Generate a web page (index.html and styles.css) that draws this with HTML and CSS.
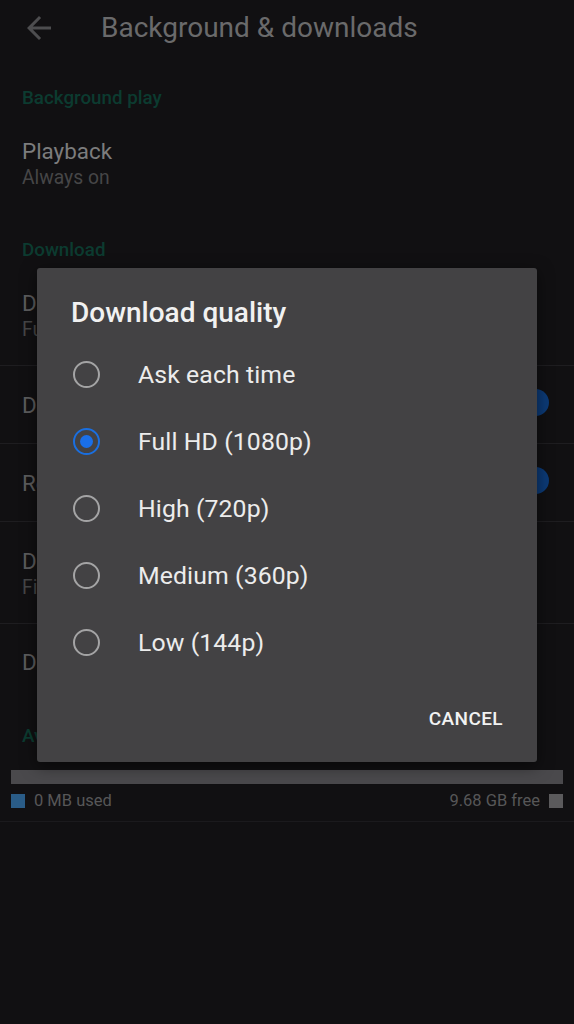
FILE: index.html
```html
<!DOCTYPE html>
<html lang="en">
<head>
<meta charset="utf-8">
<title>Background &amp; downloads</title>
<link rel="stylesheet" href="styles.css">
</head>
<body>
<div class="screen">
  <header class="topbar">
    <svg class="back" viewBox="0 0 24 24" width="36" height="36"><path d="M20 11H7.83l5.59-5.59L12 4l-8 8 8 8 1.41-1.41L7.83 13H20v-2z" fill="#4d4d4f"/></svg>
    <h1 class="title">Background &amp; downloads</h1>
  </header>

  <div class="sec-head first">Background play</div>
  <div class="row two playback">
    <div class="text">
      <div class="r-title">Playback</div>
      <div class="r-sub">Always on</div>
    </div>
  </div>

  <div class="sec-head">Download</div>
  <div class="row two quality divided">
    <div class="text">
      <div class="r-title">Download quality</div>
      <div class="r-sub">Full HD (1080p)</div>
    </div>
  </div>
  <div class="row one divided">
    <div class="r-title">Download over Wi-Fi only</div>
    <div class="switch"><span class="thumb"></span></div>
  </div>
  <div class="row one divided">
    <div class="r-title">Recommended downloads</div>
    <div class="switch"><span class="thumb"></span></div>
  </div>
  <div class="row two location divided">
    <div class="text">
      <div class="r-title">Download location</div>
      <div class="r-sub">Files on device storage</div>
    </div>
  </div>
  <div class="row one last">
    <div class="r-title">Delete all downloads</div>
  </div>

  <div class="sec-head">Available storage</div>
  <div class="storage">
    <div class="bar"></div>
    <div class="legend">
      <div class="leg"><span class="sq used"></span><span>0 MB used</span></div>
      <div class="leg"><span>9.68 GB free</span><span class="sq free"></span></div>
    </div>
  </div>

  <div class="dialog">
    <h2 class="d-title">Download quality</h2>
    <ul class="options">
      <li class="opt"><span class="radio"></span><span class="o-label">Ask each time</span></li>
      <li class="opt"><span class="radio on"></span><span class="o-label">Full HD (1080p)</span></li>
      <li class="opt"><span class="radio"></span><span class="o-label">High (720p)</span></li>
      <li class="opt"><span class="radio"></span><span class="o-label">Medium (360p)</span></li>
      <li class="opt"><span class="radio"></span><span class="o-label">Low (144p)</span></li>
    </ul>
    <div class="actions"><span class="btn">CANCEL</span></div>
  </div>
</div>
</body>
</html>
```

FILE: styles.css
```css
* { box-sizing: border-box; }
html, body { margin: 0; padding: 0; }
body {
  background: #111012;
  font-family: Roboto, "Noto Sans", "Liberation Sans", sans-serif;
  color: #7a7a7a;
  width: 574px;
  height: 1024px;
  overflow: hidden;
}
.screen { position: relative; width: 574px; height: 1024px; }

.topbar {
  height: 56px;
  display: flex;
  align-items: center;
}
.back { margin-left: 21px; margin-top: -1px; flex: none; }
.title {
  margin: 0 0 0 44px;
  font-size: 28px;
  font-weight: 400;
  color: #6a6a6b;
  line-height: 56px;
}

.sec-head {
  height: 48px;
  line-height: 48px;
  padding-left: 22px;
  font-size: 18.8px;
  font-weight: 500;
  color: #0c3b30;
}
.sec-head.first { margin-top: 18px; }

.row { padding: 0 0 0 22px; }
.row.divided { border-bottom: 1px solid #1e1d20; }
.r-title { font-size: 22.4px; line-height: 28px; color: #5c5c5d; white-space: nowrap; }
.r-sub { font-size: 19.3px; line-height: 26px; color: #464647; white-space: nowrap; }
.playback { height: 104px; padding-top: 15px; }
.playback .r-title { color: #7c7c7d; }
.quality { height: 92px; padding-top: 15px; }
.location { height: 102px; padding-top: 25px; }
.row.one {
  height: 78px;
  display: flex;
  align-items: center;
  justify-content: space-between;
}
.row.one.last { height: 88px; align-items: flex-start; padding-top: 24px; }

.switch {
  position: relative;
  width: 50px;
  height: 27px;
  margin-right: 25px;
  margin-top: -5px;
}
.thumb {
  position: absolute;
  right: 0;
  top: 0;
  width: 27px;
  height: 27px;
  border-radius: 50%;
  background: #0c3a76;
}

.storage { padding: 10px 11px 0; }
.bar { height: 14px; background: #4a494c; }
.legend {
  display: flex;
  justify-content: space-between;
  align-items: center;
  height: 38px;
  padding: 3px 11px 7px;
  border-bottom: 1px solid #1b1a1d;
  margin: 0 -11px;
}
.leg { display: flex; align-items: center; gap: 9px; font-size: 16.5px; color: #575758; }
.sq { width: 14px; height: 14px; display: inline-block; }
.sq.used { background: #2a5c87; }
.sq.free { background: #5b5a5c; }

.dialog {
  position: absolute;
  left: 37px;
  top: 268px;
  width: 500px;
  height: 494px;
  background: #434244;
  border-radius: 3px;
  box-shadow: 0 4px 16px rgba(0,0,0,0.5);
  display: flex;
  flex-direction: column;
  padding-top: 27px;
}
.d-title {
  margin: 0;
  padding-left: 34px;
  font-size: 28px;
  line-height: 36px;
  font-weight: 500;
  color: #f1f1f1;
}
.options {
  list-style: none;
  margin: 10px 0 0;
  padding: 0;
}
.opt {
  height: 67px;
  display: flex;
  align-items: center;
  padding-left: 36px;
  gap: 38px;
}
.radio {
  width: 27px;
  height: 27px;
  border-radius: 50%;
  border: 2.8px solid #a4a4a5;
  display: flex;
  align-items: center;
  justify-content: center;
  flex: none;
}
.radio.on { border-color: #1a6fe0; }
.radio.on::after {
  content: "";
  width: 13px;
  height: 13px;
  border-radius: 50%;
  background: #1a6fe8;
}
.o-label { font-size: 24.8px; letter-spacing: 0.1px; color: #ececec; }
.actions {
  margin-top: auto;
  display: flex;
  justify-content: flex-end;
  padding: 0 34px 19px 0;
}
.btn {
  height: 48px;
  line-height: 48px;
  font-size: 19px;
  font-weight: 500;
  letter-spacing: 0.4px;
  color: #f2f2f2;
}
```
